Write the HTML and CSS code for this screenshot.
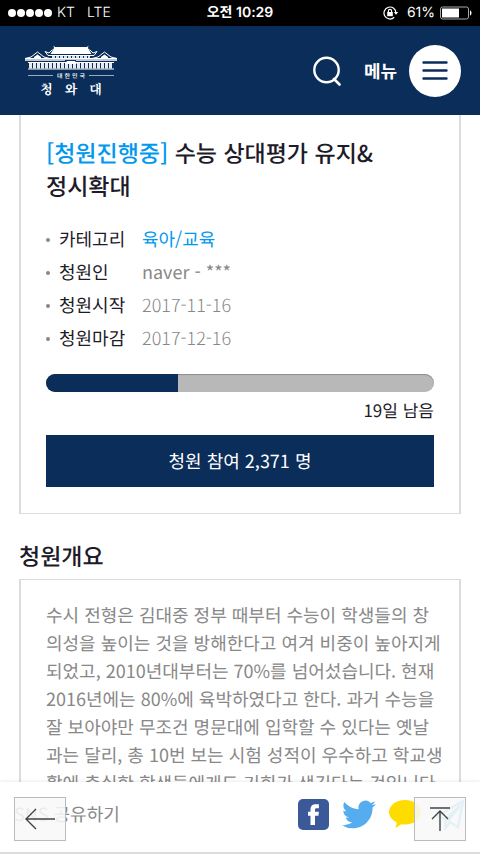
FILE: index.html
```
<!DOCTYPE html>
<html lang="ko">
  <head>
    <meta charset="UTF-8" />
    <meta name="viewport" content="width=device-width, initial-scale=1.0" />
    <title>수능 상대평가 유지&amp; 정시확대</title>
    <link rel="stylesheet" href="styles.css" />
  </head>
  <body>
    <!-- Status bar -->
    <div class="status-bar">
      <div class="status-left">
        <svg class="signal" width="44" height="10" viewBox="0 0 44 10" fill="#fff">
          <circle cx="4" cy="5" r="4" />
          <circle cx="13" cy="5" r="4" />
          <circle cx="22" cy="5" r="4" />
          <circle cx="31" cy="5" r="4" />
          <circle cx="40" cy="5" r="4" />
        </svg>
        <span>KT</span>
        <span class="network">LTE</span>
      </div>
      <div class="status-time">오전 10:29</div>
      <div class="status-right">
        <svg width="16" height="14" viewBox="0 0 16 14" fill="none" stroke="#fff" stroke-width="1.2">
          <path d="M11.2 11.3A6 6 0 1 1 13 7" />
          <path d="M10.8 6h4.4L13 8.8z" fill="#fff" stroke="none" />
          <rect x="4.2" y="6" width="5.6" height="4.2" fill="#fff" stroke="none" />
          <path d="M5.4 6.3V5a1.6 1.6 0 0 1 3.2 0v1.3" />
        </svg>
        <span>61%</span>
        <svg class="battery" width="32" height="14" viewBox="0 0 32 14">
          <rect x="0.5" y="1" width="28" height="12" rx="2" fill="none" stroke="#aaa" />
          <rect x="2" y="2.5" width="17" height="9" fill="#fff" />
          <path d="M30 4.5c2 .5 2 4.5 0 5z" fill="#fff" />
        </svg>
      </div>
    </div>

    <!-- Header -->
    <header class="header">
      <a class="logo" href="#" aria-label="대한민국 청와대">
        <svg width="94" height="25" viewBox="0 0 94 25">
          <!-- roofs -->
          <path fill="#fff" d="M29.5 0.5L31 2h32l1.5-1.500L64 3l3.500 6H26.500L30 3z" />
          <g fill="none" stroke="#fff">
            <path d="M28.500 4.500L25 8l-4-1.500L24 10.500h46L73 6.500 69 8l-3.500-3.500" />
            <path d="M24 13.500h46" />
            <path d="M1 13.500l6-1.500 6.500-5L20 12l6 1.500zM68 13.500l6-1.500 6.500-5L87 12l6 1.500z" />
            <path d="M10 12.500l3.500-2.500 3.500 2.500zM77 12.500l3.500-2.500 3.500 2.500z" fill="#fff" />
            <path d="M1 15h92" stroke-width="1.500" />
          </g>
          <path stroke="#fff" stroke-width="3" stroke-dasharray="3 1" opacity=".85" d="M28 12.500h38" />
          <!-- columns -->
          <path stroke="#fff" stroke-width="6" stroke-dasharray="3 1" opacity=".9" d="M5 20.500h84" />
          <path stroke="#fff" d="M4 17.500h86M4 24h86" />
          <path stroke="#0a2d59" d="M41 15.500h11" />
          <path fill="#fff" d="M41 19l2-3h8l2 3z" />
        </svg>
        <span class="logo-country"><span>대</span><span>한</span><span>민</span><span>국</span></span>
        <span class="logo-name"><span>청</span><span>와</span><span>대</span></span>
      </a>
      <div class="header-tools">
        <button class="search-btn" type="button" aria-label="검색">
          <svg width="30" height="30" viewBox="0 0 30 30" fill="none" stroke="#fff" stroke-width="2.4" stroke-linecap="round">
            <circle cx="13.5" cy="14" r="12.2" />
            <path d="M21 23l5.500 5.500" stroke-width="2.6" />
          </svg>
        </button>
        <button class="menu-btn" type="button">
          <span>메뉴</span>
          <span class="menu-circle">
            <svg width="26" height="20" viewBox="0 0 26 20" stroke="#0a2d59" stroke-width="2.4" stroke-linecap="round">
              <path d="M1.500 1.500h23M1.500 9.500h23M1.500 17.500h23" />
            </svg>
          </span>
        </button>
      </div>
    </header>

    <main class="content">
      <section class="card petition">
        <h1><span class="state">[청원진행중]</span> 수능 상대평가 유지&amp; 정시확대</h1>
        <dl class="info">
          <div class="info-row">
            <dt>카테고리</dt>
            <dd class="category">육아/교육</dd>
          </div>
          <div class="info-row">
            <dt>청원인</dt>
            <dd>naver - ***</dd>
          </div>
          <div class="info-row">
            <dt>청원시작</dt>
            <dd class="date">2017-11-16</dd>
          </div>
          <div class="info-row">
            <dt>청원마감</dt>
            <dd class="date">2017-12-16</dd>
          </div>
        </dl>
        <div class="progress">
          <div class="progress-fill"></div>
        </div>
        <p class="remain">19일 남음</p>
        <button class="join-btn" type="button">청원 참여 2,371 명</button>
      </section>

      <h2>청원개요</h2>
      <section class="card overview">
        <p>
          수시 전형은 김대중 정부 때부터 수능이 학생들의 창<br />의성을 높이는
          것을 방해한다고 여겨 비중이 높아지게<br />되었고, 2010년대부터는
          70%를 넘어섰습니다. 현재<br />2016년에는 80%에 육박하였다고 한다.
          과거 수능을<br />잘 보아야만 무조건 명문대에 입학할 수 있다는
          옛날<br />과는 달리, 총 10번 보는 시험 성적이 우수하고
          학교생<br />활에 충실한 학생들에게도 기회가 생긴다는 것입니다.
        </p>
      </section>
    </main>

    <!-- Share bar -->
    <footer class="share-bar">
      <span class="share-label">SNS 공유하기</span>
      <div class="share-links">
        <a href="#" aria-label="페이스북">
          <svg width="31" height="31" viewBox="0 0 31 31">
            <rect width="31" height="31" rx="5" fill="#3b5998" />
            <path d="M12.5 26v-9.200H10v-4h2.500v-2.600C12.500 7 14.400 5.300 17.400 5.300h3.500V9.200h-2.300c-1.300 0-1.600.6-1.600 1.700v1.900h3.900l-.5 4H17V26z" fill="#fff" />
          </svg>
        </a>
        <a href="#" aria-label="트위터">
          <svg width="34" height="31" viewBox="0 1.5 24 21">
            <path fill="#55acee" d="M23.950 4.570a10 10 0 0 1-2.820.770 4.960 4.960 0 0 0 2.160-2.720c-.95.550-2 .950-3.130 1.180a4.920 4.920 0 0 0-8.380 4.480C7.690 8.090 4.070 6.130 1.640 3.160a4.820 4.820 0 0 0-.67 2.480c0 1.710.87 3.210 2.190 4.100a4.900 4.900 0 0 1-2.230-.620v.060a4.920 4.920 0 0 0 3.950 4.830 5 5 0 0 1-2.210.080 4.940 4.940 0 0 0 4.600 3.420A9.870 9.870 0 0 1 0 19.540a13.990 13.990 0 0 0 7.550 2.210c9.050 0 14-7.500 14-13.980 0-.210 0-.420-.020-.630a9.940 9.940 0 0 0 2.420-2.570z" />
          </svg>
        </a>
        <a href="#" aria-label="카카오톡">
          <svg width="34" height="30" viewBox="0 0 34 30">
            <path fill="#ffdc00" d="M16 1C25 1 32 6.500 32 13.300S25 25.500 16 25.500c-1.300 0-2.500-.1-3.700-.3L6.300 29l1.500-5.600C3.200 21.200 0 17.500 0 13.300 0 6.500 7 1 16 1z" />
          </svg>
        </a>
        <a href="#" aria-label="텔레그램">
          <svg width="29" height="31" viewBox="0 0 29 31" fill="none" stroke="#4bb5e6" stroke-width="2.4">
            <path d="M27 2L2 17l7 3.500L24 7 12 22l10 6z" />
            <path d="M9.500 20.500V29l4-5" />
          </svg>
        </a>
      </div>
      <button class="float-btn back" type="button" aria-label="뒤로">
        <svg width="30" height="22" viewBox="0 0 30 22" fill="none" stroke="#444" stroke-width="1.4">
          <path d="M11 1L1 11l10 10M1 11h29" />
        </svg>
      </button>
      <button class="float-btn top" type="button" aria-label="맨 위로">
        <svg width="22" height="24" viewBox="0 0 22 24" fill="none" stroke="#444" stroke-width="1.4">
          <path d="M1 1h20M11 24V4M3 12l8-8 8 8" />
        </svg>
      </button>
    </footer>
  </body>
</html>
```
FILE: styles.css
```
:root {
  --navy: #0a2d59;
  --blue: #0099ee;
  --text: #1d1b29;
  --gray: #888;
  --border: #dcdcdc;
}

* {
  box-sizing: border-box;
}

body {
  margin: 0;
  height: 100vh;
  display: flex;
  flex-direction: column;
  overflow: hidden;
  background: #fff;
  color: var(--text);
  font-family: "Noto Sans CJK KR", sans-serif;
  font-size: 18px;
  text-rendering: geometricPrecision;
}

h1,
h2,
p,
dl,
dd {
  margin: 0;
}

button {
  padding: 0;
  border: none;
  background: none;
  font-family: inherit;
  text-rendering: inherit;
  cursor: pointer;
}

svg {
  display: block;
}

/* Status bar */
.status-bar {
  flex: none;
  display: grid;
  grid-template-columns: 1fr auto 1fr;
  align-items: center;
  height: 26px;
  padding: 0 8px;
  background: #000;
  color: #fff;
  font-family: Inter, "Noto Sans CJK KR", sans-serif;
  font-size: 14px;
  line-height: 26px;
}

.status-left,
.status-right {
  display: flex;
  align-items: center;
  gap: 5px;
}

.status-left {
  font-weight: 300;
}

.network {
  margin-left: 7px;
}

.status-time {
  font-weight: 600;
}

.status-right {
  justify-content: flex-end;
}

.status-right span {
  margin-left: 3px;
}

/* Header */
.header {
  flex: none;
  display: flex;
  align-items: center;
  justify-content: space-between;
  height: 89px;
  padding: 0 19px 0 24px;
  background: var(--navy);
}

.logo {
  display: flex;
  flex-direction: column;
  align-items: center;
  color: #fff;
  text-decoration: none;
}

.logo-country {
  display: flex;
  align-items: center;
  gap: 2px;
  width: 86px;
  margin-top: 2px;
  font-size: 6px;
  font-weight: 500;
  line-height: 8px;
}

.logo-country::before,
.logo-country::after {
  content: "";
  flex: 1;
  height: 1px;
  margin: 0 2px 0 0;
  background: #9aa9bf;
}

.logo-country::after {
  margin: 0 0 0 2px;
}

.logo-name {
  display: flex;
  gap: 12px;
  font-family: "Noto Serif CJK KR", "Noto Sans CJK KR", serif;
  font-size: 13px;
  font-weight: 700;
  line-height: 17px;
}

.header-tools {
  display: flex;
  align-items: center;
  gap: 21px;
}

.menu-btn {
  display: flex;
  align-items: center;
  gap: 12px;
  color: #fff;
  font-size: 18px;
  font-weight: 700;
}

.menu-circle {
  display: flex;
  align-items: center;
  justify-content: center;
  width: 52px;
  height: 52px;
  border-radius: 50%;
  background: #fff;
}

/* Content */
.content {
  flex: 1;
  min-height: 0;
  padding: 0 19px;
  overflow: hidden;
}

.card {
  padding: 0 25px;
  border: 1px solid var(--border);
  border-width: 1px 2px;
}

.petition {
  padding-top: 21px;
  padding-bottom: 26px;
  border-top: none;
}

h1 {
  font-size: 23px;
  font-weight: 500;
  line-height: 33px;
  word-break: keep-all;
}

.state,
.category {
  color: var(--blue);
}

.info {
  margin-top: 21px;
  line-height: 33px;
}

.info-row {
  display: flex;
  align-items: center;
}

.info-row::before {
  content: "";
  width: 4px;
  height: 4px;
  margin-right: 9px;
  border-radius: 50%;
  background: var(--gray);
}

dt {
  width: 83px;
}

dd {
  color: var(--gray);
}

dd.category {
  color: var(--blue);
}

dd.date {
  font-weight: 300;
}

.progress {
  height: 18px;
  margin-top: 19px;
  border-radius: 9px;
  overflow: hidden;
  background: #b8b8b8;
  box-shadow: inset 0 1px 1px #8c8c8c;
}

.progress-fill {
  width: 34%;
  height: 100%;
  background: var(--navy);
}

.remain {
  margin-top: 5px;
  font-size: 17px;
  line-height: 25px;
  text-align: right;
}

.join-btn {
  display: block;
  width: 100%;
  height: 52px;
  margin-top: 13px;
  background: var(--navy);
  color: #fff;
  font-size: 18px;
}

h2 {
  margin: 25px 0 7px;
  font-size: 23px;
  font-weight: 500;
  line-height: 33px;
}

.overview {
  padding: 21px 15px 20px 25px;
  color: var(--gray);
  line-height: 28px;
}

/* Share bar */
.share-bar {
  position: relative;
  flex: none;
  display: flex;
  align-items: center;
  justify-content: space-between;
  height: 72px;
  padding: 0 15px 6px 14px;
  border-bottom: 2px solid var(--border);
  background: #fff;
  box-shadow: 0 -1px 3px rgba(0, 0, 0, 0.08);
}

.share-label {
  color: var(--gray);
}

.share-links {
  display: flex;
  align-items: center;
  gap: 13px;
}

.float-btn {
  position: absolute;
  top: 15px;
  display: flex;
  align-items: center;
  justify-content: center;
  width: 52px;
  height: 44px;
  border: 1px solid #bbb;
  background: rgba(248, 248, 248, 0.88);
}

.back {
  left: 14px;
}

.top {
  right: 14px;
}
```
